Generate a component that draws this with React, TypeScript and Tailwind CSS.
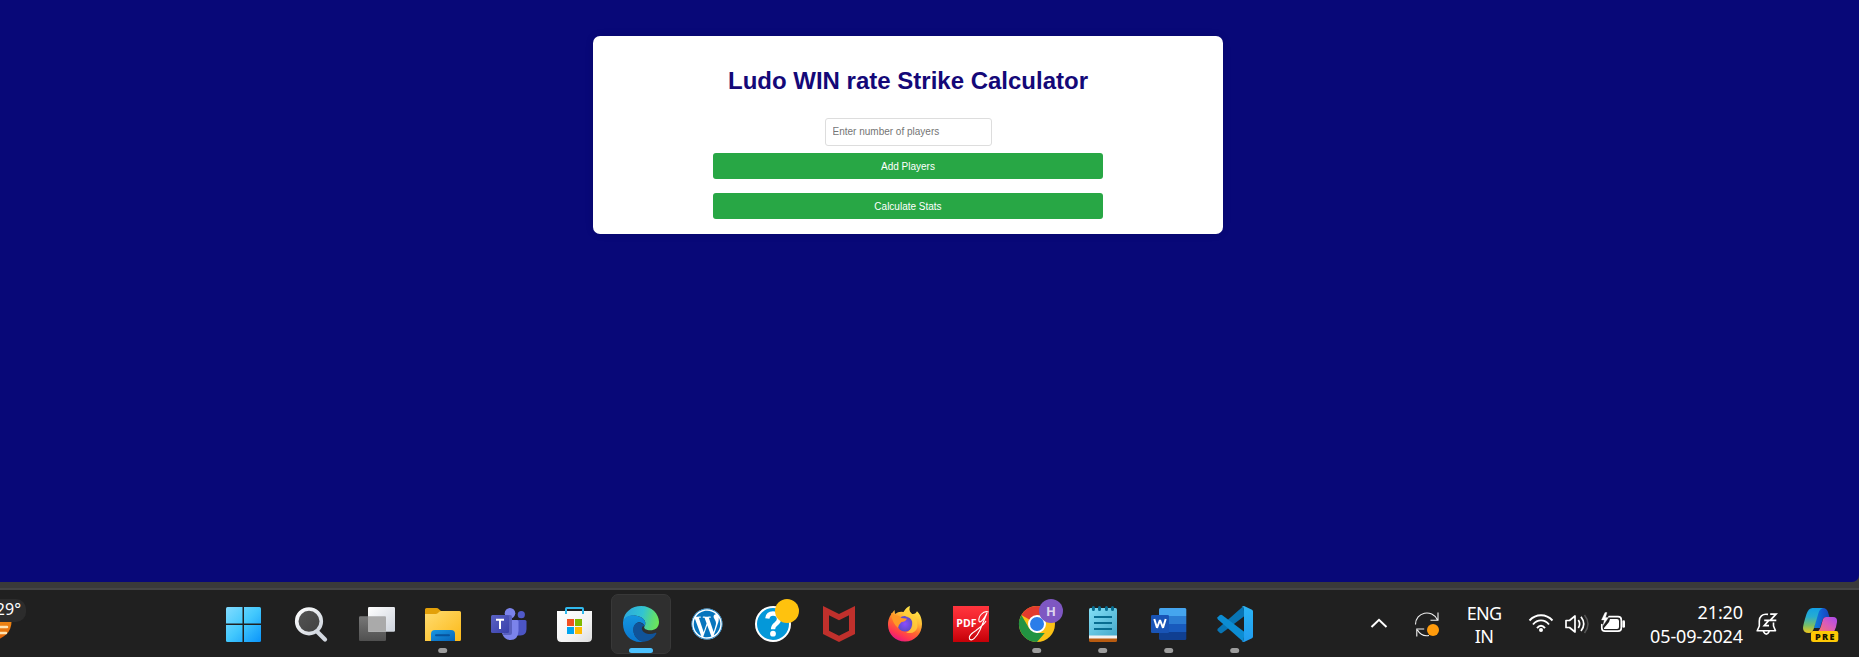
import React from "react";
import { FaWordpress } from "react-icons/fa";

function Slot({ children, dot, active }: { children: React.ReactNode; dot?: boolean; active?: boolean }) {
  return (
    <div className="h-[67px] w-[66px] shrink-0">
      <svg width="66" height="67" viewBox="0 0 66 67" className="block">
        {active && <rect x="3.5" y="4.5" width="59" height="59" rx="6.5" fill="#2f2f2f" stroke="#383838" />}
        {children}
        {dot && <rect x="28.2" y="58" width="9" height="5" rx="2.5" fill="#9d9d9d" />}
        {active && <rect x="21" y="58" width="24" height="5" rx="2.5" fill="#4cc2ff" />}
      </svg>
    </div>
  );
}

function Gradients() {
  return (
    <svg width="0" height="0" className="absolute">
      <defs>
        <linearGradient id="win" gradientUnits="userSpaceOnUse" x1="15" y1="17" x2="50" y2="52"><stop stopColor="#82dcff" /><stop offset=".5" stopColor="#42c8fd" /><stop offset="1" stopColor="#0a94fa" /></linearGradient>
        <linearGradient id="lens" x2="1" y2="1"><stop stopColor="#555" /><stop offset="1" stopColor="#404040" /></linearGradient>
        <linearGradient id="silver" x2="1" y2="1"><stop stopColor="#fff" /><stop offset="1" stopColor="#cdd3dc" /></linearGradient>
        <linearGradient id="back" x2="0" y2="1"><stop stopColor="#777" /><stop offset="1" stopColor="#505050" /></linearGradient>
        <linearGradient id="fold" x2="1" y2="1"><stop stopColor="#ffdc70" /><stop offset="1" stopColor="#fcb918" /></linearGradient>
        <linearGradient id="foldb" x2="1" y2="1"><stop stopColor="#1797e2" /><stop offset="1" stopColor="#0864b8" /></linearGradient>
        <linearGradient id="teams" x2="1" y2="1"><stop stopColor="#5a62c3" /><stop offset="1" stopColor="#3940ab" /></linearGradient>
        <linearGradient id="bag" x2="1" y2="1"><stop stopColor="#fff" /><stop offset=".6" stopColor="#f3f3f3" /><stop offset="1" stopColor="#ddd" /></linearGradient>
        <linearGradient id="edgeTop" gradientUnits="userSpaceOnUse" x1="15" y1="24" x2="51" y2="34"><stop stopColor="#2ca8dd" /><stop offset=".5" stopColor="#32c4d2" /><stop offset=".8" stopColor="#5bdb79" /><stop offset="1" stopColor="#6ee854" /></linearGradient>
        <linearGradient id="edgeLeft" x2="0" y2="1"><stop stopColor="#1595df" /><stop offset="1" stopColor="#0976ce" /></linearGradient>
        <linearGradient id="fox" x1=".8" y1="0" x2=".3" y2="1"><stop stopColor="#fff44f" /><stop offset=".35" stopColor="#ffbd35" /><stop offset=".6" stopColor="#ff6a2e" /><stop offset=".82" stopColor="#ff3750" /><stop offset="1" stopColor="#e31587" /></linearGradient>
        <radialGradient id="globe"><stop stopColor="#8b4dff" /><stop offset="1" stopColor="#5b4bc7" /></radialGradient>
        <linearGradient id="pdf" x2="0" y2="1"><stop stopColor="#ff353d" /><stop offset=".45" stopColor="#f0202a" /><stop offset="1" stopColor="#c40007" /></linearGradient>
        <linearGradient id="note" x2="1" y2="1"><stop stopColor="#83e0f7" /><stop offset="1" stopColor="#46a9cb" /></linearGradient>
        <linearGradient id="code" x2="0" y2="1"><stop stopColor="#2bb4f6" /><stop offset="1" stopColor="#209cef" /></linearGradient>
        <linearGradient id="copA" x2="0" y2="1"><stop stopColor="#139fe5" /><stop offset=".35" stopColor="#27add0" /><stop offset=".7" stopColor="#7abe66" /><stop offset="1" stopColor="#f1c61b" /></linearGradient>
        <linearGradient id="copB" x1="1" y1="0" x2="0" y2="1"><stop stopColor="#a94af0" /><stop offset=".45" stopColor="#d95bbb" /><stop offset="1" stopColor="#ff7759" /></linearGradient>
        <linearGradient id="copC" x2="1"><stop stopColor="#0d80db" /><stop offset=".6" stopColor="#1457cf" /><stop offset="1" stopColor="#1744b8" /></linearGradient>
        <linearGradient id="sun" x2="0" y2="1"><stop stopColor="#f9a51c" /><stop offset="1" stopColor="#e06308" /></linearGradient>
      </defs>
    </svg>
  );
}

function Apps() {
  return (
    <div className="flex">
      <Slot>
        <g fill="url(#win)" transform="translate(-1 0)">
          <path d="M16.5 17H31.5V33.5H15V18.5Q15 17 16.5 17Z" /><path d="M33 17H48.5Q50 17 50 18.5V33.5H33Z" />
          <path d="M15 35H31.5V52H16.5Q15 52 15 50.5Z" /><path d="M33 35H50V50.5Q50 52 48.5 52H33Z" />
        </g>
      </Slot>
      <Slot>
        <path d="M39 41.5L47 49.5" stroke="#d3d8e0" strokeWidth="4.2" strokeLinecap="round" />
        <circle cx="31" cy="31.3" r="12.3" fill="url(#lens)" stroke="url(#silver)" strokeWidth="3.6" />
      </Slot>
      <Slot>
        <rect x="15" y="26.3" width="27" height="24.7" rx="1.2" fill="url(#back)" />
        <rect x="24" y="17" width="27" height="24.8" rx="1.2" fill="url(#silver)" />
        <path d="M24 26.3H41Q42 26.3 42 27.3V41.8H25Q24 41.8 24 40.8Z" fill="#aaa" />
      </Slot>
      <Slot dot>
        <path d="M15 19.5Q15 18 16.5 18H26.5Q28 18 29 19.2L31 21V26H15Z" fill="#e3a009" />
        <path d="M15 24H25.5Q27 24 28 23L29 22Q30 21 31.5 21H49.5Q51 21 51 22.5V49.5Q51 51 49.5 51H15Z" fill="url(#fold)" />
        <path d="M21 51V44Q21 40 25 40H41Q45 40 45 44V51Z" fill="url(#foldb)" />
        <path d="M26 45.2H39" stroke="#07529b" strokeWidth="2" strokeLinecap="round" />
      </Slot>
      <Slot>
        <circle cx="45.3" cy="24.7" r="3.6" fill="#5059c9" />
        <path d="M39 30H49Q50.5 30 50.5 31.5V39Q50.5 45 44.5 45.5H39Z" fill="#4c55c4" />
        <circle cx="34" cy="23.2" r="5.3" fill="#7b83eb" />
        <path d="M26 30H41Q42.5 30 42.5 31.5V41Q42 50 34.5 50Q28 50 26 43Z" fill="#7b83eb" />
        <path d="M32 25H34Q36 25 36 27V43Q36 45 34 45H27Z" fill="#5960bf" />
        <rect x="15" y="25" width="18" height="18" rx="1.5" fill="url(#teams)" />
        <path d="M20 29.8H28M24 29.8V39" stroke="#fff" strokeWidth="2" />
      </Slot>
      <Slot>
        <path d="M15 21H50V47.5Q50 52 45.5 52H19.5Q15 52 15 47.5Z" fill="url(#bag)" />
        <path d="M24 24V18.8Q24 18 24.8 18H40.2Q41 18 41 18.8V24" fill="none" stroke="#30b9ed" strokeWidth="2" />
        <path d="M25 29H32V36H25Z" fill="#f25022" /><path d="M33 29H40V36H33Z" fill="#7fba00" />
        <path d="M25 37H32V44H25Z" fill="#00a4ef" /><path d="M33 37H40V44H33Z" fill="#ffb900" />
      </Slot>
      <Slot active>
        <path d="M15.3 31C16 22 24 16 33 16C44 16 51 24 51 32C51 38 46.5 40.3 42.5 40.3C38 40.3 35.5 38.5 36.3 36.8C40 31 34 26 27 25.5C21 25 17 28 15.3 31Z" fill="url(#edgeTop)" />
        <path d="M15 32C16 27 21 24.8 27 25.5C34 26 39.5 31 36.5 36C34 30 25.5 31.5 25.5 40C25.5 46 30 51 36 51.7C24 54 15 45 15 34Z" fill="url(#edgeLeft)" />
        <path d="M36.4 36C33 29.8 25.2 32 25.2 39.5C25.2 46 30 51.5 36 51.8C42 51 46.5 47.5 48.3 43.8C48.6 42.8 47.8 42.6 47 43C42 45.5 34 43.5 33.8 38.2Q34 36 36.4 36Z" fill="#105399" />
      </Slot>
      <Slot>
        <circle cx="33" cy="34" r="15.4" fill="#fff" />
        <g transform="translate(17 18)"><FaWordpress size={32} color="#0775bd" /></g>
      </Slot>
      <Slot>
        <circle cx="33" cy="34" r="17" fill="#0498d9" stroke="#fff" strokeWidth="2" />
        <path d="M27.3 28.5C27.8 24.7 30 23.5 33 23.5C36.7 23.5 39 25.5 39 29C39 34.2 33 33.5 33 39.3" fill="none" stroke="#fff" strokeWidth="4.3" />
        <circle cx="33" cy="43.7" r="2.9" fill="#fff" /><circle cx="47" cy="21" r="12" fill="#ffc20e" />
      </Slot>
      <Slot>
        <path fillRule="evenodd" d="M17 16L33 24L49 16V44L33 52L17 44ZM23 25.2V40.7L33 45.8L43 40.7V25.2L33 30.2Z" fill="#c0302c" />
      </Slot>
      <Slot>
        <path d="M38 16C37 20 37.5 22 40 24C43 24.5 44 22.8 45 21.3C49 25 50 30 50 34C50 44 42.5 51.5 33 51.5C23.5 51.5 16 44 16 35C16 29 18 25.5 20.5 22.5L22.5 20L23 24Q27 21 31.5 22C33.5 18.5 35.5 17 38 16Z" fill="url(#fox)" />
        <circle cx="33" cy="33.8" r="7.8" fill="url(#globe)" />
        <path d="M19 23L24 25.5Q27 25 29.5 28L35 28.7Q33 32 29.5 32Q27 34 26 38Q20 33 19 23Z" fill="#ff9826" />
        <path d="M35 27Q41 28 40 35Q39 41 34 42.5Q43 45 45.5 37Q46 29 39 23L37 20Q32 21 31 25Z" fill="#ffcf3a" opacity=".8" />
      </Slot>
      <Slot>
        <rect x="15" y="16" width="36" height="36" fill="url(#pdf)" />
        <text x="18.3" y="37" fill="#fff" className="font-['Open_Sans',sans-serif] text-[10.5px] font-bold">PDF</text>
        <path d="M50.5 22C45 20 40 27 41 31C42 34 46 29 49 23L42 40C38 48 34 51.5 31.5 49C30 46 34 43 38 40.5C43 36.5 46.5 34 48 31" fill="none" stroke="#fff" strokeWidth="1.1" />
      </Slot>
      <Slot dot>
        <circle cx="33" cy="34" r="18" fill="#fbc116" />
        <path d="M33 34L17.4 25A18 18 0 0 1 48.6 25H33Z" fill="#e33b2e" />
        <path d="M17.4 25L25.2 38.5L33 43H40.8L33 52A18 18 0 0 1 17.4 25Z" fill="#229342" />
        <circle cx="33" cy="34" r="8" fill="#2b7de9" stroke="#fff" strokeWidth="2" />
        <circle cx="47" cy="21" r="12" fill="#7e57c2" />
        <text x="47" y="25.7" textAnchor="middle" fill="#ddd4ee" className="font-['Open_Sans',sans-serif] text-[13px] font-bold">H</text>
      </Slot>
      <Slot dot>
        <path d="M19 45H47V50.5Q47 52 45.5 52H20.5Q19 52 19 50.5Z" fill="#b85b10" /><path d="M19 44H47V48.5H19Z" fill="#f1f1f1" />
        <path d="M19 19.5Q19 18 20.5 18H45.5Q47 18 47 19.5V45.5H19Z" fill="url(#note)" />
        <path d="M24 27H42M24 33H42M24 39H42" stroke="#086d91" strokeWidth="1.9" />
        <path d="M23.4 17.5V19.5M29.5 17.5V19.5M36.5 17.5V19.5M42.5 17.5V19.5" stroke="#086d91" strokeWidth="3" strokeLinecap="round" />
      </Slot>
      <Slot dot>
        <path d="M23 26V19.5Q23 18 24.5 18H49Q50.3 18 50.3 19.5V26Z" fill="#45a5ef" />
        <path d="M23 26H50.3V34H23Z" fill="#2b7cd3" /><path d="M23 34H50.3V42H23Z" fill="#185abd" />
        <path d="M23 42H50.3V48.5Q50.3 50 49 50H24.5Q23 50 23 48.5Z" fill="#103f91" />
        <rect x="15" y="25" width="18" height="18" rx="1.3" fill="#1954b6" />
        <path d="M18.3 29L21 37.8L24 30L27 37.8L29.7 29" fill="none" stroke="#fff" strokeWidth="2" strokeLinejoin="bevel" />
      </Slot>
      <Slot dot>
        <path d="M41.5 16L42.5 26L20 43Q18.8 43.8 17.7 42.8L15.6 40.7Q14.8 39.5 16 38.4Z" fill="#0875b5" />
        <path d="M41.5 52L42.5 42L20 25Q18.8 24.2 17.7 25.2L15.6 27.3Q14.8 28.5 16 29.6Z" fill="#0c8dd3" />
        <path d="M42 16L50 19.8Q51 20.4 51 21.5V46.5Q51 47.6 50 48.2L42 52L39.5 51.2Q42 51.5 42 49V19Q42 16.5 39.5 16.8Z" fill="url(#code)" />
      </Slot>
    </div>
  );
}

function Tray() {
  return (
    <div className="flex h-[67px] text-white">
      <svg className="block shrink-0" width="90" height="67" viewBox="0 0 90 67" fill="none">
        <path d="M1.5 37L9 29.8L16.5 37" stroke="#fff" strokeWidth="2" />
        <path d="M45.5 34.5C45.5 22 62 18.5 67.5 30M68 22.5V30.2H60.5M46.8 46.5V39H54.2M47.5 40C50 44.5 54 46.4 59 45.5" stroke="#f2f2f2" strokeWidth="1.1" />
        <circle cx="63" cy="40" r="6" fill="#ff9b0c" />
      </svg>
      <div className="ml-[3px] flex h-[67px] w-[42px] shrink-0 flex-col items-center pt-[12px] text-[18px] leading-[23px] tracking-[-0.7px]"><span>ENG</span><span>IN</span></div>
      <svg className="ml-[21px] block shrink-0" width="110" height="67" viewBox="1526 590 110 67" fill="none" stroke="#fff">
        <path d="M1529.5 620.5C1536 613.5 1546 613.5 1552.5 620.5M1533 624.5C1537.5 619 1544.5 619 1549 624.5M1537 628.2C1539.5 625 1542.5 625 1545 628.2" strokeWidth="1.9" />
        <circle cx="1541" cy="630" r="2" fill="#fff" stroke="none" />
        <path d="M1566 620.5H1569.5L1575 616V632L1569.5 627.5H1566Z" strokeWidth="1.7" strokeLinejoin="round" />
        <path d="M1578.3 620Q1581 624 1578.3 628M1581 616.8Q1586.5 624 1581 631" strokeWidth="1.7" /><path d="M1584.5 615Q1591.5 624 1584.5 633" stroke="#555" strokeWidth="1.5" />
        <path d="M1609 616.7H1618Q1621.3 616.7 1621.3 620V628Q1621.3 631.2 1618 631.2H1605Q1601.8 631.2 1601.8 628V624.5" strokeWidth="1.7" strokeLinecap="round" />
        <path d="M1623.7 621.5V626.5" strokeWidth="2.6" strokeLinecap="round" />
        <path d="M1610 619H1617Q1619 619 1619 621V627Q1619 629 1617 629H1604V628L1609 622Z" fill="#fff" stroke="none" />
        <path d="M1605 612.5L1601.5 620H1604.3L1603 625.5L1608.5 617.5H1605.5L1607 612.5Z" fill="#fff" strokeWidth=".3" />
      </svg>
      <div className="h-[67px] w-[107px] shrink-0 pt-[11px] text-right text-[18px] leading-[23.5px] tracking-[-0.1px]">
        <div>21:20</div><div>05-09-2024</div>
      </div>
      <svg className="ml-[6px] block shrink-0" width="110" height="67" viewBox="1749 590 110 67" fill="none">
        <path d="M1768 614.4C1762 613.3 1759.3 617 1759.3 621V626L1757.2 630.8H1775.5L1773.5 626V622.5M1763.3 631.3Q1766.3 637 1769.3 631.3" stroke="#fff" strokeWidth="1.6" strokeLinejoin="round" />
        <path d="M1770.2 614.2H1776L1770.2 620.3H1776.3M1764.2 620.3H1768.8L1764.2 625.7H1769" stroke="#fff" strokeWidth="1.7" />
        <path d="M1818 608H1823Q1826.5 608 1827.8 611.5L1829.5 617H1826Q1823.5 617 1822.5 620L1820 628H1814Z" fill="url(#copC)" />
        <path d="M1812.5 608H1823Q1819.5 609 1818.5 613L1814 628Q1812.5 633 1809 633Q1803 633 1803 628Q1803 625 1806.5 614Q1808.5 608 1812.5 608Z" fill="url(#copA)" />
        <path d="M1826 617H1833Q1837.5 617 1837 622Q1836.5 627 1834 632L1816 633Q1819.5 631 1821 626L1823 619Q1824 617 1826 617Z" fill="url(#copB)" />
        <rect x="1811" y="631" width="27.3" height="11" rx="2.2" fill="#fdc805" />
        <text x="1815" y="640" textLength="19.5" fill="#171300" className="font-['Open_Sans',sans-serif] text-[9px] font-extrabold">PRE</text>
      </svg>
    </div>
  );
}

export default function App() {
  return (
    <div className="flex h-[657px] w-[1859px] flex-col overflow-hidden bg-[#202020] font-['Liberation_Sans',Arial,sans-serif]">
      <Gradients />
      <div className="h-[590px] border-b-2 border-[#454545] bg-[#3a3a3a]">
        <main className="flex h-[582px] items-start rounded-br-[7px] bg-[#080878] pt-9 pl-[593px]">
          <section className="flex h-[198px] w-[630px] flex-col items-center rounded-[7px] bg-white pt-[31px] shadow-[0_0_8px_rgba(0,0,0,0.1)]">
            <h1 className="text-[24px] leading-[28px] font-bold text-[#140878]">Ludo WIN rate Strike Calculator</h1>
            <input placeholder="Enter number of players" className="mt-[23px] block h-[28px] w-[167px] rounded-[3px] border border-[#ddd] bg-white px-[7px] pb-px text-[10px] placeholder:text-[#757575]" />
            <button className="mt-[7px] h-[26px] w-[390px] rounded-[3px] bg-[#28a745] text-[10px] text-white">Add Players</button>
            <button className="mt-[14px] h-[26px] w-[390px] rounded-[3px] bg-[#28a745] text-[10px] text-white">Calculate Stats</button>
          </section>
        </main>
      </div>
      <footer className="flex h-[67px] font-['Noto_Sans','Open_Sans',sans-serif]">
        <div className="w-[212px] shrink-0">
          <svg width="212" height="67" viewBox="0 590 212 67" className="block">
            <circle cx="-6" cy="622" r="17.5" fill="url(#sun)" />
            <path d="M-2 627H7M-2 633H6" stroke="#ffe3b0" strokeWidth="2.5" strokeLinecap="round" />
            <rect x="-20" y="599" width="46" height="23" rx="10" fill="#2c2c2c" />
            <text x="21" y="615" textAnchor="end" fill="#fff" fontSize="16">29°</text>
          </svg>
        </div>
        <Apps />
        <div className="w-[102px] shrink-0" />
        <Tray />
      </footer>
    </div>
  );
}
